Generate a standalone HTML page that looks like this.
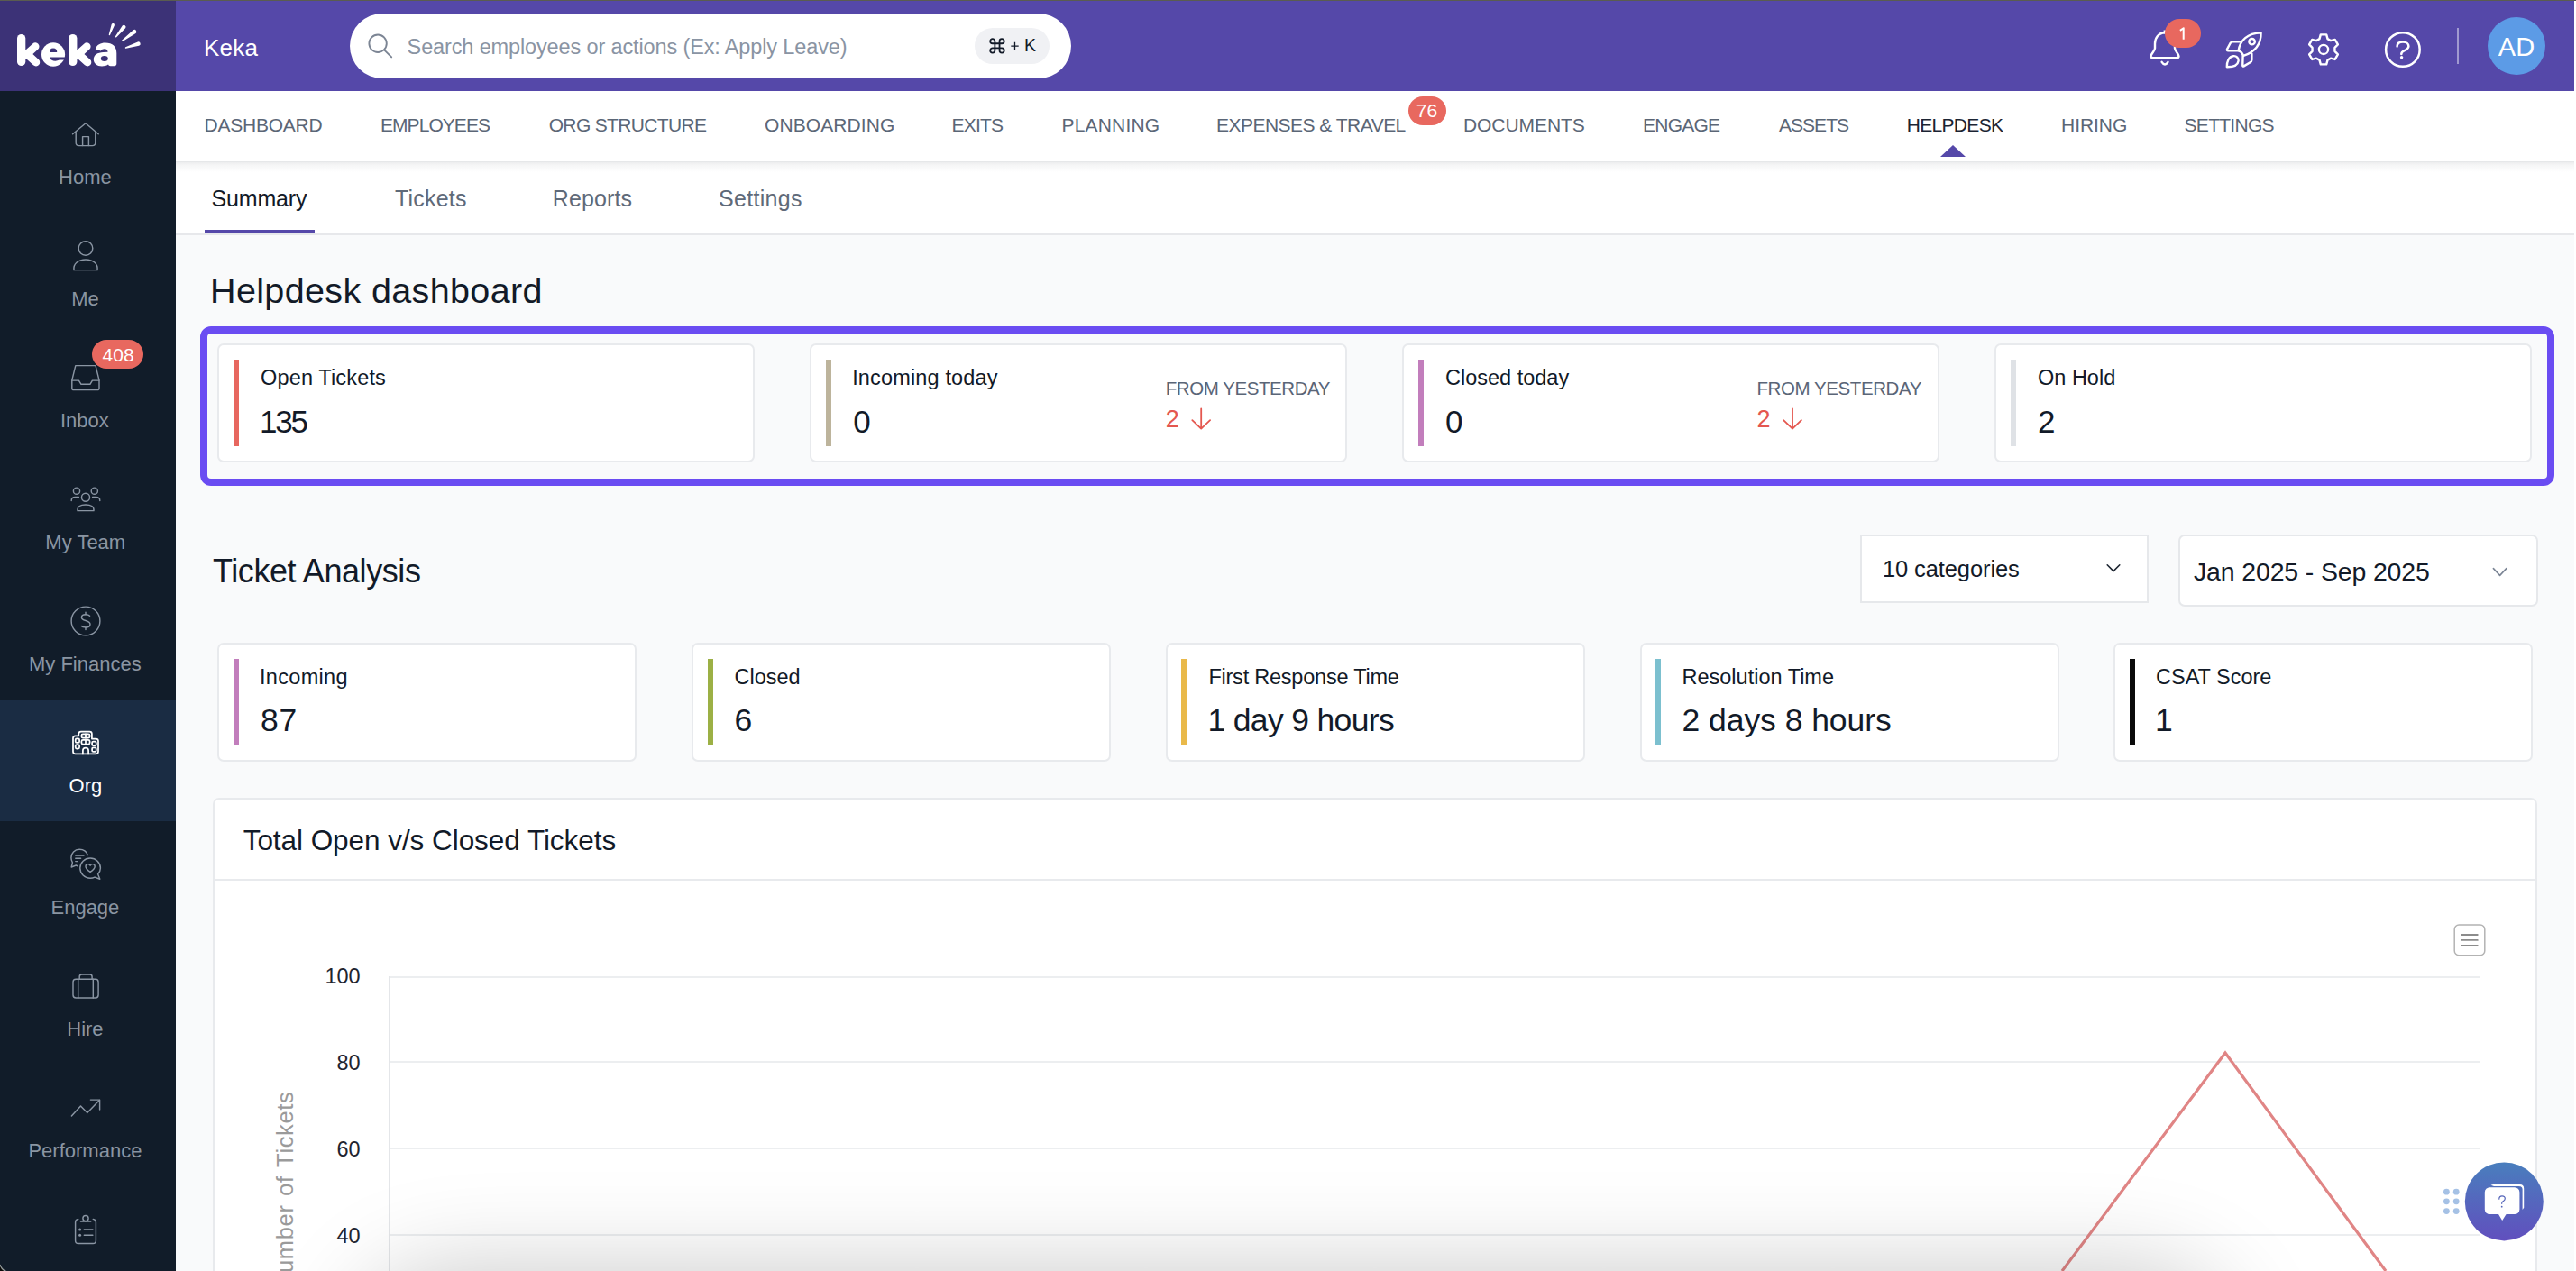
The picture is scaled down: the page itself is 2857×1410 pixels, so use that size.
<!DOCTYPE html>
<html><head><meta charset="utf-8">
<style>
*{box-sizing:border-box;margin:0;padding:0}
html,body{width:2857px;height:1410px;overflow:hidden}
body{position:relative;background:#f9fafb;font-family:"Liberation Sans",sans-serif}
.a{position:absolute}
.t{position:absolute;line-height:1;white-space:nowrap;font-family:"Liberation Sans",sans-serif}
.card{position:absolute;background:#fff;border:2px solid #e8eaed;border-radius:7px}
.bar{position:absolute;width:6px}
svg{position:absolute;overflow:visible}
</style></head><body>
<!-- frame -->
<div class="a" style="left:0;top:0;width:2857px;height:1px;background:#5a5c50"></div>
<div class="a" style="left:2855px;top:1px;width:2px;height:1409px;background:#ffffff"></div>
<!-- sidebar -->
<div class="a" style="left:0;top:1px;width:195px;height:100px;background:#3c3277"></div>
<div class="a" style="left:0;top:101px;width:195px;height:1309px;background:#111c29"></div>
<div class="a" style="left:0;top:776px;width:195px;height:135px;background:#1a2c43"></div>
<!-- top bar -->
<div class="a" style="left:195px;top:1px;width:2660px;height:100px;background:#5548a9"></div>
<!-- nav bar -->
<div class="a" style="left:195px;top:101px;width:2660px;height:78px;background:#fff"></div>
<!-- subtab bar -->
<div class="a" style="left:195px;top:180px;width:2660px;height:81px;background:#fff;border-bottom:2px solid #e7e8eb"></div>
<div class="a" style="left:195px;top:179px;width:2660px;height:12px;background:linear-gradient(rgba(30,40,50,0.095),rgba(30,40,50,0.045) 35%,rgba(30,40,50,0))"></div>
<div class="a" style="left:227px;top:255px;width:122px;height:4px;background:#5548a9"></div>
<!-- helpdesk triangle -->
<div class="a" style="left:2152px;top:161px;width:0;height:0;border-left:14px solid transparent;border-right:14px solid transparent;border-bottom:13px solid #5548a9"></div>

<!-- search -->
<div class="a" style="left:388px;top:15px;width:800px;height:72px;border-radius:36px;background:#fff"></div>
<div class="a" style="left:1081px;top:31px;width:83px;height:40px;border-radius:20px;background:#f0f1f4"></div>

<!-- badges -->
<div class="a" style="left:1562px;top:107px;width:42px;height:32px;border-radius:16px;background:#e8685f"></div>
<div class="a" style="left:102px;top:377px;width:57px;height:32px;border-radius:16px;background:#e8685f"></div>
<!-- divider + avatar -->
<div class="a" style="left:2725px;top:31px;width:2px;height:40px;background:rgba(255,255,255,0.45)"></div>
<div class="a" style="left:2759px;top:19px;width:64px;height:64px;border-radius:32px;background:#5c9be6"></div>

<!-- highlight box -->
<div class="a" style="left:222px;top:362px;width:2611px;height:177px;border:8px solid #6a4cf2;border-radius:12px"></div>
<!-- top cards -->
<div class="card" style="left:241px;top:381px;width:596px;height:132px"></div>
<div class="card" style="left:898px;top:381px;width:596px;height:132px"></div>
<div class="card" style="left:1555px;top:381px;width:596px;height:132px"></div>
<div class="card" style="left:2212px;top:381px;width:596px;height:132px"></div>
<div class="bar" style="left:259px;top:399px;height:96px;background:#e7675f"></div>
<div class="bar" style="left:916px;top:399px;height:96px;background:#bdb49c"></div>
<div class="bar" style="left:1573px;top:399px;height:96px;background:#c27ebc"></div>
<div class="bar" style="left:2230px;top:399px;height:96px;background:#dfe2e6"></div>

<!-- dropdowns -->
<div class="a" style="left:2063px;top:593px;width:320px;height:76px;background:#fff;border:2px solid #e6e8eb"></div>
<div class="a" style="left:2416px;top:593px;width:399px;height:80px;background:#fff;border:2px solid #e6e8eb;border-radius:7px"></div>

<!-- metric cards -->
<div class="card" style="left:241px;top:713px;width:465px;height:132px"></div>
<div class="card" style="left:767px;top:713px;width:465px;height:132px"></div>
<div class="card" style="left:1293px;top:713px;width:465px;height:132px"></div>
<div class="card" style="left:1819px;top:713px;width:465px;height:132px"></div>
<div class="card" style="left:2344px;top:713px;width:465px;height:132px"></div>
<div class="bar" style="left:259px;top:731px;height:96px;background:#c27ebc"></div>
<div class="bar" style="left:785px;top:731px;height:96px;background:#9cb045"></div>
<div class="bar" style="left:1310px;top:731px;height:96px;background:#e9b94a"></div>
<div class="bar" style="left:1836px;top:731px;height:96px;background:#7cc0cf"></div>
<div class="bar" style="left:2362px;top:731px;height:96px;background:#0a0a0a"></div>

<!-- chart card -->
<div class="card" style="left:236px;top:885px;width:2578px;height:600px"></div>
<div class="a" style="left:238px;top:975px;width:2574px;height:2px;background:#e8eaed"></div>
<!-- grid -->
<div class="a" style="left:432px;top:1083px;width:2319px;height:2px;background:#eceef0"></div>
<div class="a" style="left:432px;top:1177px;width:2319px;height:2px;background:#eceef0"></div>
<div class="a" style="left:432px;top:1273px;width:2319px;height:2px;background:#eceef0"></div>
<div class="a" style="left:432px;top:1369px;width:2319px;height:2px;background:#eceef0"></div>
<div class="a" style="left:431px;top:1083px;width:2px;height:330px;background:#e4e6e9"></div>

<!-- red line -->
<svg style="left:0;top:0" width="2857" height="1410"><polyline points="2287,1410 2468,1168 2646,1410" fill="none" stroke="#e08585" stroke-width="3.2" stroke-linejoin="miter"/></svg>


<!-- bottom shadow -->
<div class="a" style="left:440px;top:1455px;width:1990px;height:120px;border-radius:60px;background:#ddd;box-shadow:0 0 110px 45px rgba(0,0,0,0.215)"></div>


<div class="t" style="left:226.00px;top:39.50px;font-size:26px;color:#ffffff;letter-spacing:0.199px;">Keka</div>
<div class="t" style="left:1136.00px;top:41.22px;font-size:19.5px;color:#121a28;">K</div>
<div class="t" style="left:451.60px;top:40.53px;font-size:23.5px;color:#8a94a3;letter-spacing:-0.132px;">Search employees or actions (Ex: Apply Leave)</div>
<div class="t" style="left:226.50px;top:127.95px;font-size:21px;color:#5b6676;letter-spacing:-0.232px;">DASHBOARD</div>
<div class="t" style="left:422.00px;top:127.95px;font-size:21px;color:#5b6676;letter-spacing:-0.943px;">EMPLOYEES</div>
<div class="t" style="left:608.70px;top:127.95px;font-size:21px;color:#5b6676;letter-spacing:-0.655px;">ORG STRUCTURE</div>
<div class="t" style="left:848.00px;top:127.95px;font-size:21px;color:#5b6676;letter-spacing:0.091px;">ONBOARDING</div>
<div class="t" style="left:1055.50px;top:127.95px;font-size:21px;color:#5b6676;letter-spacing:-0.794px;">EXITS</div>
<div class="t" style="left:1177.60px;top:127.95px;font-size:21px;color:#5b6676;letter-spacing:0.168px;">PLANNING</div>
<div class="t" style="left:1349.00px;top:127.95px;font-size:21px;color:#5b6676;letter-spacing:-0.522px;">EXPENSES &amp; TRAVEL</div>
<div class="t" style="left:1623.00px;top:127.95px;font-size:21px;color:#5b6676;letter-spacing:-0.066px;">DOCUMENTS</div>
<div class="t" style="left:1822.00px;top:127.95px;font-size:21px;color:#5b6676;letter-spacing:-0.770px;">ENGAGE</div>
<div class="t" style="left:1973.00px;top:127.95px;font-size:21px;color:#5b6676;letter-spacing:-0.971px;">ASSETS</div>
<div class="t" style="left:2114.70px;top:127.95px;font-size:21px;color:#1b2433;letter-spacing:-0.677px;">HELPDESK</div>
<div class="t" style="left:2286.00px;top:127.95px;font-size:21px;color:#5b6676;letter-spacing:-0.033px;">HIRING</div>
<div class="t" style="left:2422.60px;top:127.95px;font-size:21px;color:#5b6676;letter-spacing:-0.729px;">SETTINGS</div>
<div class="t" style="left:234.60px;top:207.50px;font-size:25px;color:#121a28;letter-spacing:-0.176px;">Summary</div>
<div class="t" style="left:438.00px;top:207.50px;font-size:25px;color:#5f6a79;letter-spacing:0.209px;">Tickets</div>
<div class="t" style="left:612.70px;top:207.50px;font-size:25px;color:#5f6a79;letter-spacing:0.144px;">Reports</div>
<div class="t" style="left:797.00px;top:207.50px;font-size:25px;color:#5f6a79;letter-spacing:0.310px;">Settings</div>
<div class="t" style="left:233.00px;top:302.62px;font-size:39.5px;color:#121a28;letter-spacing:0.361px;">Helpdesk dashboard</div>
<div class="t" style="left:289.00px;top:408.32px;font-size:23.5px;color:#121a28;letter-spacing:0.153px;">Open Tickets</div>
<div class="t" style="left:288.00px;top:450.05px;font-size:35px;color:#121a28;letter-spacing:-2.265px;">135</div>
<div class="t" style="left:945.20px;top:408.32px;font-size:23.5px;color:#121a28;letter-spacing:0.145px;">Incoming today</div>
<div class="t" style="left:946.20px;top:450.05px;font-size:35px;color:#121a28;">0</div>
<div class="t" style="left:1603.00px;top:408.32px;font-size:23.5px;color:#121a28;">Closed today</div>
<div class="t" style="left:1603.00px;top:450.05px;font-size:35px;color:#121a28;">0</div>
<div class="t" style="left:2260.00px;top:408.32px;font-size:23.5px;color:#121a28;">On Hold</div>
<div class="t" style="left:2260.00px;top:450.05px;font-size:35px;color:#121a28;">2</div>
<div class="t" style="left:1292.70px;top:420.57px;font-size:20.5px;color:#5a6577;letter-spacing:-0.425px;">FROM YESTERDAY</div>
<div class="t" style="left:1292.70px;top:451.85px;font-size:27px;color:#e4574f;">2</div>
<div class="t" style="left:1948.50px;top:420.57px;font-size:20.5px;color:#5a6577;letter-spacing:-0.425px;">FROM YESTERDAY</div>
<div class="t" style="left:1948.50px;top:451.85px;font-size:27px;color:#e4574f;">2</div>
<div class="t" style="left:236.00px;top:616.40px;font-size:36px;color:#121a28;letter-spacing:-0.416px;">Ticket Analysis</div>
<div class="t" style="left:2088.00px;top:619.23px;font-size:25.5px;color:#121a28;letter-spacing:-0.112px;">10 categories</div>
<div class="t" style="left:2433.00px;top:619.77px;font-size:28.5px;color:#121a28;letter-spacing:-0.154px;">Jan 2025 - Sep 2025</div>
<div class="t" style="left:288.00px;top:740.32px;font-size:23.5px;color:#121a28;letter-spacing:0.302px;">Incoming</div>
<div class="t" style="left:289.00px;top:782.12px;font-size:35.5px;color:#121a28;letter-spacing:0.857px;">87</div>
<div class="t" style="left:814.50px;top:740.32px;font-size:23.5px;color:#121a28;">Closed</div>
<div class="t" style="left:814.50px;top:782.12px;font-size:35.5px;color:#121a28;">6</div>
<div class="t" style="left:1340.40px;top:740.32px;font-size:23.5px;color:#121a28;letter-spacing:-0.224px;">First Response Time</div>
<div class="t" style="left:1339.40px;top:782.12px;font-size:35.5px;color:#121a28;letter-spacing:-0.647px;">1 day 9 hours</div>
<div class="t" style="left:1865.50px;top:740.32px;font-size:23.5px;color:#121a28;">Resolution Time</div>
<div class="t" style="left:1865.50px;top:782.12px;font-size:35.5px;color:#121a28;letter-spacing:-0.047px;">2 days 8 hours</div>
<div class="t" style="left:2391.00px;top:740.32px;font-size:23.5px;color:#121a28;">CSAT Score</div>
<div class="t" style="left:2390.00px;top:782.12px;font-size:35.5px;color:#121a28;">1</div>
<div class="t" style="left:269.70px;top:916.73px;font-size:31.5px;color:#121a28;letter-spacing:-0.052px;">Total Open v/s Closed Tickets</div>
<div class="t" style="left:360.46px;top:1071.53px;font-size:23.5px;color:#1f2530;">100</div>
<div class="t" style="left:373.53px;top:1167.62px;font-size:23.5px;color:#1f2530;">80</div>
<div class="t" style="left:373.53px;top:1263.62px;font-size:23.5px;color:#1f2530;">60</div>
<div class="t" style="left:373.53px;top:1359.62px;font-size:23.5px;color:#1f2530;">40</div>
<div class="t" style="left:65.08px;top:185.60px;font-size:22px;color:#8a95a2;">Home</div>
<div class="t" style="left:79.14px;top:320.60px;font-size:22px;color:#8a95a2;">Me</div>
<div class="t" style="left:66.89px;top:455.60px;font-size:22px;color:#8a95a2;">Inbox</div>
<div class="t" style="left:50.35px;top:590.60px;font-size:22px;color:#8a95a2;">My Team</div>
<div class="t" style="left:31.95px;top:725.60px;font-size:22px;color:#8a95a2;">My Finances</div>
<div class="t" style="left:76.58px;top:860.60px;font-size:22px;color:#ffffff;">Org</div>
<div class="t" style="left:56.49px;top:995.60px;font-size:22px;color:#8a95a2;">Engage</div>
<div class="t" style="left:74.25px;top:1130.60px;font-size:22px;color:#8a95a2;">Hire</div>
<div class="t" style="left:31.45px;top:1265.60px;font-size:22px;color:#8a95a2;">Performance</div>
<div class="t" style="left:1570.86px;top:112.15px;font-size:21px;color:#ffffff;">76</div>
<div class="t" style="left:113.62px;top:382.65px;font-size:21px;color:#ffffff;">408</div>
<div class="t" style="left:2770.83px;top:38.35px;font-size:29px;color:#ffffff;">AD</div>
<svg style="left:0;top:0" width="195" height="101"><g transform="translate(0,0)"><line x1="23.65" y1="42.6" x2="23.65" y2="68.45" stroke="#fff" stroke-width="9.3" stroke-linecap="round"/><line x1="30.5" y1="59.5" x2="39.2" y2="51.6" stroke="#fff" stroke-width="8.6" stroke-linecap="round"/><line x1="31.5" y1="61.5" x2="39.9" y2="69.2" stroke="#fff" stroke-width="8.6" stroke-linecap="round"/><rect x="19" y="55" width="14" height="10" fill="#fff"/></g><g transform="translate(57.1,0)"><line x1="23.65" y1="42.6" x2="23.65" y2="68.45" stroke="#fff" stroke-width="9.3" stroke-linecap="round"/><line x1="30.5" y1="59.5" x2="39.2" y2="51.6" stroke="#fff" stroke-width="8.6" stroke-linecap="round"/><line x1="31.5" y1="61.5" x2="39.9" y2="69.2" stroke="#fff" stroke-width="8.6" stroke-linecap="round"/><rect x="19" y="55" width="14" height="10" fill="#fff"/></g><ellipse cx="59.05" cy="60.5" rx="13.05" ry="13.2" fill="#fff"/><path d="M55.2,57.9 Q54.6,53.5 59,53.4 Q63.4,53.5 63.2,57.9 Z" fill="#3c3277"/><path d="M55,63.4 L73.5,63.4 L73.5,66.6 L66,66.6 Q61,68.8 57,66.4 Q55.2,65.2 55,63.4 Z" fill="#3c3277"/><path d="M105.8,54.6 C107.5,49.6 111.5,47.6 116.8,47.6 C125,47.6 129.3,52 129.3,59 L129.3,70.6 Q129.3,73.3 126.6,73.3 L122.5,73.3 Q120.4,73.3 120,71.6 C118,73 115.5,73.5 113,73.5 C107.5,73.5 103.8,70.2 103.8,66 C103.8,61 108,58.2 114.5,58 L119.6,57.8 C119.4,55.2 118,54.2 116,54.2 C114,54.2 112.6,55 111.8,56.4 Z" fill="#fff"/><ellipse cx="115.8" cy="65" rx="4" ry="2.9" fill="#3c3277"/><path d="M122.06,38.83 L126.90,28.17 A1.7,1.7 0 0 0 123.70,27.03 L120.74,38.37 A0.7,0.7 0 0 0 122.06,38.83 ZM129.22,41.30 L139.11,31.28 A2.2,2.2 0 0 0 135.69,28.52 L127.98,40.30 A0.8,0.8 0 0 0 129.22,41.30 ZM135.97,45.94 L150.56,37.05 A2.3,2.3 0 0 0 147.84,33.35 L135.03,44.66 A0.8,0.8 0 0 0 135.97,45.94 ZM139.74,53.76 L154.16,50.70 A2.2,2.2 0 0 0 152.84,46.50 L139.26,52.24 A0.8,0.8 0 0 0 139.74,53.76 Z" fill="#fff"/></svg>
<svg style="left:0;top:0" width="1" height="1"><circle cx="419.1" cy="48.25" r="9.7" fill="none" stroke="#7c8594" stroke-width="1.9"/><path d="M426.6,55.8 L434.2,63.4" stroke="#7c8594" stroke-width="1.9" stroke-linecap="round"/></svg>
<svg style="left:0;top:0" width="1" height="1"><g transform="translate(1095.62,40.52) scale(0.8611)"><path d="M15 6v12a3 3 0 1 0 3-3H6a3 3 0 1 0 3 3V6a3 3 0 1 0-3 3h12a3 3 0 1 0-3-3" fill="none" stroke="#121a28" stroke-width="2.1"/></g><path d="M1121.3,51.2 H1129.7 M1125.5,46.8 V55.6" stroke="#121a28" stroke-width="1.3"/></svg>
<svg style="left:0;top:0" width="1" height="1"><path d="M2401,36.3 C2394,36.5 2390,42 2390,48.5 L2390,53.5 C2390,56.5 2385.5,60 2385.5,62.2 C2385.5,63.6 2386.5,64.2 2388,64.2 L2414,64.2 C2415.5,64.2 2416.5,63.6 2416.5,62.2 C2416.5,60 2412,56.5 2412,53.5 L2412,48.5 C2412,42 2408,36.5 2401,36.3 Z M2400.8,33.5 V36.3" fill="none" stroke="#fff" stroke-width="2.4" stroke-linejoin="round"/><path d="M2397.6,68.8 Q2401,74.2 2404.5,68.8" fill="none" stroke="#fff" stroke-width="2.4" stroke-linecap="round"/><rect x="2401" y="21" width="40" height="32" rx="16" fill="#e8685f"/><path d="M2417.9,33.9 L2421.7,31.2 V43.8" fill="none" stroke="#fff" stroke-width="2" stroke-linejoin="round"/></svg>
<svg style="left:0;top:0" width="1" height="1"><g fill="none" stroke="#fff" stroke-width="2.4" stroke-linejoin="round" stroke-linecap="round"><path d="M2482.6,56.2 C2484.5,45 2492.5,36.6 2507.6,36.4 C2507.8,49 2501,57.5 2488.2,61.9 C2487,59 2485.5,57.2 2482.6,56.2 Z"/><path d="M2483.8,46.4 L2476.5,46.4 C2475,46.4 2474,47.2 2473.4,48.2 L2470,54.6 C2469.5,55.6 2470,56.3 2471.2,56.3 L2482.6,56.3"/><path d="M2497.4,59.8 L2497.4,66.6 C2497.4,67.8 2496.8,68.6 2495.6,69.3 L2488.6,73.4 C2487.8,73.8 2487.3,73.5 2487.3,72.6 L2487.6,62"/><path d="M2469.8,74.3 C2469.6,68.5 2472,62.6 2477,62.2 C2480.5,61.9 2483,64.2 2482.6,67.6 C2482,72 2477.2,74.4 2469.8,74.3 Z"/><circle cx="2497.6" cy="46.2" r="3.2"/></g></svg>
<svg style="left:0;top:0" width="1" height="1"><path d="M2572.48,43.14 L2573.79,38.41 L2580.21,38.41 L2581.52,43.14 L2584.93,45.11 L2589.68,43.88 L2592.88,49.43 L2589.44,52.93 L2589.44,56.87 L2592.88,60.37 L2589.68,65.92 L2584.93,64.69 L2581.52,66.66 L2580.21,71.39 L2573.79,71.39 L2572.48,66.66 L2569.07,64.69 L2564.32,65.92 L2561.12,60.37 L2564.56,56.87 L2564.56,52.93 L2561.12,49.43 L2564.32,43.88 L2569.07,45.11 Z" fill="none" stroke="#fff" stroke-width="2.4" stroke-linejoin="round"/><circle cx="2577.0" cy="54.9" r="5.1" fill="none" stroke="#fff" stroke-width="2.3"/></svg>
<svg style="left:0;top:0" width="1" height="1"><circle cx="2664.9" cy="55" r="18.8" fill="none" stroke="#fff" stroke-width="2.5"/><path d="M2658.6,51.6 C2658.6,48.2 2661.3,46.5 2665,46.5 C2669,46.5 2671.4,48.6 2671.4,51.2 C2671.4,54.1 2668.6,55.3 2665.8,56.7 C2663.9,57.7 2663.3,58.5 2663.3,60.1" fill="none" stroke="#fff" stroke-width="2.5" stroke-linecap="round"/><circle cx="2663.6" cy="63.8" r="1.7" fill="#fff"/></svg>
<svg style="left:0;top:0" width="1" height="1"><g fill="none" stroke="#8a95a3" stroke-width="1.45" stroke-linecap="round" stroke-linejoin="round"><path d="M80.6,148.8 L95,136.8 L109.2,148.8"/><path d="M84.2,146.6 V158.2 Q84.2,161.6 87.6,161.6 H102.4 Q105.8,161.6 105.8,158.2 V146.6"/><path d="M91.6,161.6 V151.6 H98.4 V161.6"/><circle cx="95" cy="275.5" r="7.8"/><path d="M82,299.6 C81,293 86.5,288 95,288 C103.5,288 109,293 108,299.6 Z"/><path d="M83.8,405.6 H106 L110,421.9 V430.4 Q110,432.6 107.8,432.6 H82 Q79.8,432.6 79.8,430.4 V421.9 Z"/><path d="M79.8,422.1 H87.4 L90,426.3 H99.9 L102.4,422.1 H110"/><circle cx="95" cy="551.8" r="4.5"/><path d="M86,566.6 C85.5,562 89,559.9 95,559.9 C101,559.9 104.5,562 104,566.6 Z"/><circle cx="85" cy="544.7" r="3.6"/><circle cx="104.8" cy="544.7" r="3.6"/><path d="M79.2,555.4 C79.2,552.8 81,551.5 83.5,551.5 H87.4"/><path d="M110.8,555.4 C110.8,552.8 109,551.5 106.5,551.5 H102.6"/><circle cx="95" cy="689" r="15.9"/><path d="M99.6,683.3 C98.6,682.2 97,681.8 95,681.8 C92,681.8 90.4,683.2 90.4,685 C90.4,689.5 100,687.5 100,692.5 C100,694.5 98,696 95,696 C93,696 91,695.5 90.2,694.6"/><path d="M95,679.2 V681.8 M95,696 V698.6"/><path d="M97.3,948.5 C95.8,944.2 92.2,942.3 88.1,942.3 C82.8,942.3 78.9,946.3 78.9,951.5 C78.9,953.5 79.5,955.3 80.4,956.8 L79.2,962 L84.3,960 C85,960.4 85.6,960.7 86.2,960.9"/><path d="M83.8,949 H93 M83.8,952.3 H89.6 M83.8,955.6 H86.2"/><path d="M108.6,969.8 C110.5,967.8 111.4,965.5 111.4,963.1 C111.4,956.9 106.3,951.9 100.1,951.9 C93.9,951.9 88.8,956.9 88.8,963.1 C88.8,969.3 93.9,974.3 100.1,974.3 C101.9,974.3 103.6,973.9 105.1,973.1 L110.8,975.3 Z"/><path d="M100.1,967.4 C97.5,965.6 95,963.8 95,961.2 C95,959.5 96.3,958.6 97.5,958.6 C98.7,958.6 99.5,959.3 100.1,960.2 C100.7,959.3 101.5,958.6 102.7,958.6 C103.9,958.6 105.2,959.5 105.2,961.2 C105.2,963.8 102.7,965.6 100.1,967.4 Z"/><rect x="81" y="1086.3" width="28.1" height="20.7" rx="3.2"/><path d="M88.2,1086.3 V1083.4 Q88.2,1080.9 90.7,1080.9 H99.6 Q102.1,1080.9 102.1,1083.4 V1086.3"/><path d="M86.7,1086.3 V1107 M103.3,1086.3 V1107"/><path d="M79.4,1238 L89.5,1226.9 L96.8,1234.6 L110.3,1220.4"/><path d="M100.4,1220.1 H110.6 V1231"/><path d="M86.8,1352.4 Q83.6,1352.8 83.6,1356 V1376.2 Q83.6,1379.5 86.9,1379.5 H103.1 Q106.4,1379.5 106.4,1376.2 V1356 Q106.4,1352.8 103.2,1352.4"/><path d="M89.4,1355 H100.8"/><circle cx="95" cy="1351.6" r="3.1"/><path d="M93.3,1364 H102.9 M93.3,1370.3 H102.9"/></g><g fill="#8a95a3"><circle cx="88.6" cy="1364" r="1.5"/><circle cx="88.6" cy="1370.3" r="1.5"/></g></svg>
<svg style="left:0;top:0" width="1" height="1"><g fill="none" stroke="#ffffff" stroke-width="1.75" stroke-linecap="round" stroke-linejoin="round"><path d="M81,834 V819 Q81,816.3 83.6,816.3 H87.3 V814.2 Q87.3,811.6 89.9,811.6 H99.4 Q101.9,811.6 101.9,814.2 V819.5 H106.4 Q109,819.5 109,822.1 V833.8 Q109,836.4 106.4,836.4 H83.6 Q81,836.4 81,833.8 Z"/><rect x="90.4" y="814.3" width="9.2" height="4.4" rx="1.6"/><rect x="90.4" y="820.9" width="9.2" height="4.6" rx="1.6"/><path d="M95,814.3 V818.7 M95,820.9 V825.5"/><rect x="83.7" y="819.4" width="4.4" height="4.4" rx="1.4"/><rect x="83.7" y="826.1" width="4.4" height="4.4" rx="1.4"/><rect x="102.1" y="822.7" width="4.6" height="4.4" rx="1.4"/><rect x="102.1" y="829.4" width="4.6" height="4.4" rx="1.4"/><path d="M91.9,836.4 V832.6 Q91.9,829.5 95,829.5 Q98.1,829.5 98.1,832.6 V836.4"/></g></svg>
<svg style="left:0;top:0" width="1" height="1"><path d="M1332.2,453.4 V475.4 M1322.3,466.1 L1332.2,475.6 L1342.1000000000001,466.1" fill="none" stroke="#e4574f" stroke-width="1.8" stroke-linecap="round" stroke-linejoin="round"/></svg>
<svg style="left:0;top:0" width="1" height="1"><path d="M1988.0,453.4 V475.4 M1978.1,466.1 L1988.0,475.6 L1997.9,466.1" fill="none" stroke="#e4574f" stroke-width="1.8" stroke-linecap="round" stroke-linejoin="round"/></svg>
<svg style="left:0;top:0" width="1" height="1"><path d="M2337.2,626.8 L2344,633.6 L2350.8,626.8" fill="none" stroke="#1f2733" stroke-width="1.6" stroke-linecap="round" stroke-linejoin="round"/><path d="M2765.4,630.6 L2772.6,638.4 L2779.8,630.6" fill="none" stroke="#7b8595" stroke-width="1.6" stroke-linecap="round" stroke-linejoin="round"/></svg>
<svg style="left:0;top:0" width="1" height="1"><rect x="2722.2" y="1026.1" width="33.6" height="33.7" rx="5" fill="#fff" stroke="#b3b3b3" stroke-width="1.5"/><path d="M2730.3,1037 H2747.8 M2730.3,1042.9 H2747.8 M2730.3,1048.9 H2747.8" stroke="#8c8c8c" stroke-width="1.8" stroke-linecap="round"/></svg>
<svg style="left:0;top:0" width="1" height="1"><defs><linearGradient id="cg" x1="0" y1="0" x2="0" y2="1"><stop offset="0" stop-color="#497ebd"/><stop offset="1" stop-color="#614fbe"/></linearGradient></defs><circle cx="2777.3" cy="1332.9" r="43.5" fill="url(#cg)"/><path d="M2762.5,1314.8 C2763.5,1314.2 2764.5,1314 2766,1314 H2795 Q2799.2,1314 2799.2,1318.5 V1339.8 L2797.6,1342 V1319.5 Q2797.6,1316 2794,1316 H2766 Z" fill="#fff"/><rect x="2755.8" y="1317.2" width="38.6" height="29.9" rx="5.5" fill="#fff"/><path d="M2771,1347 L2775.2,1354 L2779.6,1347 Z" fill="#fff"/><path d="M2771.8,1330.2 C2771.8,1328 2773.3,1326.9 2775,1326.9 C2776.8,1326.9 2778.3,1328 2778.3,1329.8 C2778.3,1331.6 2776.8,1332.2 2775.6,1333 C2774.8,1333.6 2774.7,1334.2 2774.7,1335.3" fill="none" stroke="#5464b9" stroke-width="1.2" stroke-linecap="round"/><circle cx="2774.7" cy="1338.7" r="0.9" fill="#5464b9"/><g fill="#a5c1e5"><circle cx="2713.4" cy="1322.2" r="3.4"/><circle cx="2724.2" cy="1322.2" r="3.4"/><circle cx="2713.4" cy="1332.8" r="3.4"/><circle cx="2724.2" cy="1332.8" r="3.4"/><circle cx="2713.4" cy="1343.6" r="3.4"/><circle cx="2724.2" cy="1343.6" r="3.4"/></g></svg>
<svg style="left:0;top:0" width="1" height="1"><text transform="translate(325.1,1210.5) rotate(-90)" text-anchor="end" font-family="Liberation Sans" font-size="25.5" letter-spacing="0.65" word-spacing="2" fill="#9a9a9a">Number of Tickets</text></svg>
<svg style="left:0;top:0" width="1" height="1"><path d="M0,1403 A11,11 0 0 0 10,1411 L0,1411 Z" fill="#0a0a08"/><path d="M0,1403 A11,11 0 0 0 10,1411" fill="none" stroke="#9aa0a0" stroke-width="1.2"/></svg>
</body></html>
